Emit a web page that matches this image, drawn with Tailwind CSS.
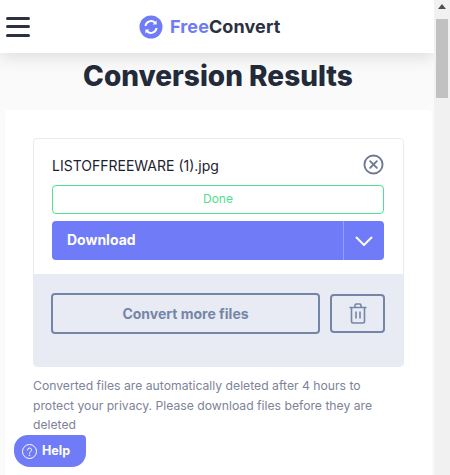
<!DOCTYPE html>
<html>
<head>
<meta charset="utf-8">
<title>FreeConvert | Conversion Results</title>
<script src="https://cdn.jsdelivr.net/npm/@tailwindcss/browser@4"></script>
</head>
<body class="overflow-hidden bg-white font-['Inter',sans-serif]">
<div class="flex h-[475px] w-[450px] overflow-hidden">
    <div class="relative h-[475px] w-[434px] overflow-hidden bg-[#fafafb]">
        <!-- header -->
        <header class="relative z-10 flex h-[53px] items-center bg-white shadow-[0_4px_16px_rgba(0,0,0,0.12)]">
            <div class="ml-[6px] flex w-[24px] flex-col gap-[5.5px]">
                <span class="h-[3px] rounded-full bg-[#2c3142]"></span>
                <span class="h-[3px] rounded-full bg-[#2c3142]"></span>
                <span class="h-[3px] rounded-full bg-[#2c3142]"></span>
            </div>
            <div class="ml-[109px] flex items-center gap-[7px]">
                <svg width="24" height="24" viewBox="0 0 24 24">
                    <circle cx="12" cy="12" r="11.5" fill="#6f7bf7"/>
                    <path d="M6.5 11a5.6 5.6 0 0 1 9.6-3.2M17.5 13a5.6 5.6 0 0 1-9.6 3.2" fill="none" stroke="#fff" stroke-width="2"/>
                    <path d="M17.6 5.6v4h-4zM6.4 18.4v-4h4z" fill="#fff"/>
                </svg>
                <span class="text-[18px] font-bold tracking-[0.1px] text-[#2c3142]"><span class="text-[#6f7bf7]">Free</span>Convert</span>
            </div>
        </header>

        <h1 class="mt-[5px] pl-[2px] text-center text-[28px] leading-[36px] font-extrabold text-[#232b3a]">Conversion Results</h1>

        <!-- card -->
        <main class="mt-[16px] ml-[5px] h-[400px] w-[427px] rounded bg-white px-[28px] pt-[28px]">
            <div class="overflow-hidden rounded border border-[#e8ebf3]">
                <div class="h-[135px] pt-[11px] pr-[19px] pl-[18px]">
                    <div class="flex h-[30px] items-center justify-between">
                        <span class="text-[14px] text-[#1c2230]">LISTOFFREEWARE (1).jpg</span>
                        <svg class="mr-[0px] mb-[2px]" width="21" height="21" viewBox="0 0 22 22" fill="none" stroke="#6c7a96" stroke-width="2">
                            <circle cx="11" cy="11" r="9.5"/>
                            <path d="M7.5 7.5l7 7M14.5 7.5l-7 7" stroke-linecap="round"/>
                        </svg>
                    </div>
                    <div class="mt-[5px] flex h-[29px] items-center justify-center rounded border border-[#4ee08e] pb-[2px] text-[12px] text-[#4ee08e]">Done</div>
                    <div class="mt-[7px] flex h-[39px] items-center rounded bg-[#6f7bf7] text-white">
                        <span class="flex-1 pb-[2px] pl-[15px] text-[14px] font-bold">Download</span>
                        <span class="flex h-full w-[41px] items-center justify-center border-l border-[#98a1fa]">
                            <svg width="18" height="10" viewBox="0 0 18 10" fill="none" stroke="#fff" stroke-width="2"><path d="M1 1l8 8 8-8"/></svg>
                        </span>
                    </div>
                </div>
                <div class="flex h-[92px] items-start gap-[10px] bg-[#e8ebf3] px-[17px] pt-[19px]">
                    <div class="flex h-[41px] w-[269px] items-center justify-center rounded border-2 border-[#7486a8] text-[14px] font-bold text-[#7486a8]">Convert more files</div>
                    <div class="mt-px flex h-[39px] w-[55px] items-center justify-center rounded border-2 border-[#7486a8]">
                        <svg width="18" height="21" viewBox="0 0 18 21" fill="none" stroke="#7486a8" stroke-width="1.6">
                            <path d="M0.5 4.5h17M6 4V2.2Q6 1 7.2 1h3.6Q12 1 12 2.2V4M2.5 4.5v13.8Q2.5 20 4.2 20h9.6q1.7 0 1.7-1.7V4.5M7 8.5v7M11 8.5v7"/>
                        </svg>
                    </div>
                </div>
            </div>
            <p class="mt-[9px] w-[345px] text-[12.2px] leading-[19.5px] text-[#7d8398]">Converted files are automatically deleted after 4 hours to protect your privacy. Please download files before they are deleted</p>
        </main>

        <!-- help button -->
        <div class="absolute top-[435px] left-[14px] flex h-[32px] w-[72px] items-center gap-[5px] rounded-tl-[14px] rounded-tr-[4px] rounded-br-[14px] rounded-bl-[16px] bg-[#6f7bf7] pl-[8px] text-[12.5px] font-bold text-white">
            <svg width="15" height="15" viewBox="0 0 15 15" fill="none" stroke="#fff" stroke-width="1">
                <circle cx="7.5" cy="7.5" r="7"/>
                <path d="M5.5 6a2 2 0 1 1 3 1.7q-1 .6-1 1.6" stroke-linecap="round"/>
                <circle cx="7.5" cy="11.3" r=".4"/>
            </svg>
            Help
        </div>
    </div>

    <!-- scrollbar -->
    <div class="flex h-[475px] w-[16px] flex-col items-center bg-[#f1f1f1]">
        <svg class="mt-[4px]" width="8" height="5" viewBox="0 0 8 5"><path d="M4 0l4 5H0z" fill="#505050"/></svg>
        <div class="mt-[10px] h-[79px] w-[12px] bg-[#c1c1c1]"></div>
    </div>
</div>
</body>
</html>
